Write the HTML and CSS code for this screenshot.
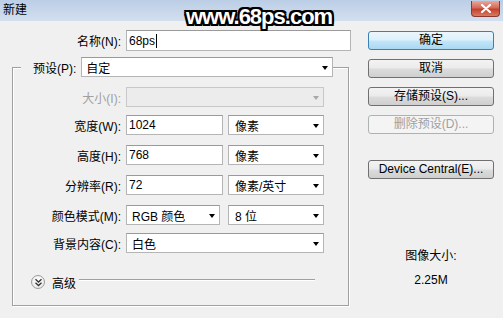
FILE: index.html
```html
<!DOCTYPE html>
<html lang="zh-CN">
<head>
<meta charset="utf-8">
<title>新建</title>
<link rel="stylesheet" href="styles.css">
</head>
<body>
<div class="window">
  <div class="titlebar">
    <span class="title">新建</span>
    <span class="close"><svg width="12" height="9" viewBox="0 0 12 9"><path d="M2 1 L10 8 M10 1 L2 8" stroke="#fff" stroke-width="2.2" stroke-linecap="round"/></svg></span>
    <span class="watermark">www.68ps.com</span>
  </div>
  <div class="content">
    <div class="main">
      <div class="row name-row">
        <label class="lbl lbl-outer">名称(N):</label>
        <div class="input input-name">68ps<span class="caret"></span></div>
      </div>
      <fieldset class="group">
        <legend class="legend">
          <span class="legend-lbl">预设(P):</span>
          <div class="sel sel-preset"><span>自定</span><i class="arrow"></i></div>
        </legend>
        <div class="rows">
          <div class="row">
            <label class="lbl disabled">大小(I):</label>
            <div class="sel sel-wide sel-disabled"><span></span><i class="arrow arrow-disabled"></i></div>
          </div>
          <div class="row tight">
            <label class="lbl">宽度(W):</label>
            <div class="input input-num">1024</div>
            <div class="sel sel-unit"><span>像素</span><i class="arrow"></i></div>
          </div>
          <div class="row">
            <label class="lbl">高度(H):</label>
            <div class="input input-num">768</div>
            <div class="sel sel-unit"><span>像素</span><i class="arrow"></i></div>
          </div>
          <div class="row">
            <label class="lbl">分辨率(R):</label>
            <div class="input input-num">72</div>
            <div class="sel sel-unit"><span>像素/英寸</span><i class="arrow"></i></div>
          </div>
          <div class="row">
            <label class="lbl">颜色模式(M):</label>
            <div class="sel sel-mode"><span>RGB 颜色</span><i class="arrow"></i></div>
            <div class="sel sel-unit"><span>8 位</span><i class="arrow"></i></div>
          </div>
          <div class="row tight">
            <label class="lbl">背景内容(C):</label>
            <div class="sel sel-wide"><span>白色</span><i class="arrow"></i></div>
          </div>
          <div class="row adv-row">
            <span class="adv-icon"><svg width="9" height="9" viewBox="0 0 9 9"><path d="M1.5 1.2 L4.5 4 L7.5 1.2 M1.5 4.8 L4.5 7.6 L7.5 4.8" fill="none" stroke="#333" stroke-width="1.3"/></svg></span>
            <span class="adv-text">高级</span>
            <span class="adv-line"></span>
          </div>
        </div>
      </fieldset>
    </div>
    <div class="side">
      <div class="btn btn-default">确定</div>
      <div class="btn">取消</div>
      <div class="btn">存储预设(S)...</div>
      <div class="btn btn-disabled">删除预设(D)...</div>
      <div class="btn btn-device">Device Central(E)...</div>
      <div class="size-label">图像大小:</div>
      <div class="size-value">2.25M</div>
    </div>
  </div>
</div>
</body>
</html>
```
FILE: styles.css
```css
html, body {
  margin: 0;
  padding: 0;
}
body {
  width: 503px;
  height: 318px;
  overflow: hidden;
  background: #f0f0f0;
  font-family: "Liberation Sans", "Noto Sans CJK SC", sans-serif;
  font-size: 12px;
  color: #000;
}
.window {
  width: 503px;
  height: 318px;
  background: #f0f0f0;
}
.titlebar {
  position: relative;
  height: 21px;
  background: linear-gradient(#bccee6, #d3dfee);
  display: flex;
  align-items: flex-start;
  justify-content: space-between;
}
.title {
  padding: 3px 0 0 3px;
  line-height: 14px;
}
.close {
  margin: 1px 3px 0 0;
  width: 29px;
  height: 16px;
  box-sizing: border-box;
  border: 1px solid #8a3a30;
  border-top: none;
  border-radius: 0 0 4px 4px;
  background: linear-gradient(#eaa89a, #d46a58 45%, #c2412f 55%, #d77b5f);
  display: flex;
  align-items: center;
  justify-content: center;
}
.watermark {
  position: absolute;
  left: 186px;
  top: 4px;
  font-family: "Liberation Sans", sans-serif;
  font-weight: bold;
  font-size: 22px;
  letter-spacing: -1px;
  line-height: 26px;
  color: #fff;
  text-shadow:
    2px 0 0 #000, -2px 0 0 #000, 0 2px 0 #000, 0 -2px 0 #000,
    2px 2px 0 #000, -2px -2px 0 #000, 2px -2px 0 #000, -2px 2px 0 #000,
    1px 1px 1px #000;
}
.content {
  display: flex;
  padding-top: 9px;
}
.main {
  width: 355px;
}
.row {
  display: flex;
  align-items: center;
  height: 20px;
}
.name-row {
  height: 21px;
}
.lbl {
  box-sizing: border-box;
  width: 113px;
  padding-right: 5px;
  text-align: right;
  white-space: nowrap;
}
.lbl-outer {
  width: 126px;
}
.disabled {
  color: #a0a0a0;
}
.input {
  box-sizing: border-box;
  height: 20px;
  background: #fff;
  border: 1px solid #b5b5b5;
  border-top-color: #9a9a9a;
  padding-left: 2px;
  display: flex;
  align-items: center;
  white-space: nowrap;
}
.input-name {
  width: 225px;
  height: 21px;
}
.caret {
  display: inline-block;
  width: 0;
  height: 14px;
  border-left: 1px solid #000;
  margin-left: 1px;
}
.input-num {
  width: 97px;
  margin-right: 5px;
}
.sel {
  box-sizing: border-box;
  height: 20px;
  background: #fff;
  border: 1px solid #b5b5b5;
  border-top-color: #9a9a9a;
  padding: 0 4px 0 5px;
  display: flex;
  align-items: center;
  justify-content: space-between;
  white-space: nowrap;
}
.sel-preset {
  width: 252px;
  padding-left: 4px;
}
.sel-wide {
  width: 198px;
}
.sel-unit {
  width: 96px;
  padding-left: 6px;
}
.sel-mode {
  width: 94px;
  margin-right: 8px;
}
.sel-disabled {
  background: #ececec;
  border-color: #c8c8c8;
}
.arrow {
  display: block;
  width: 0;
  height: 0;
  border-left: 3.5px solid transparent;
  border-right: 3.5px solid transparent;
  border-top: 4px solid #000;
  margin-top: 1px;
}
.arrow-disabled {
  border-top-color: #a8a8a8;
}
.group {
  margin: 6px 0 0 12px;
  padding: 10px 0 13px 0;
  width: 337px;
  box-sizing: border-box;
  border: 1px solid #a0a0a0;
  box-shadow: 1px 1px 0 #fff, inset 1px 1px 0 #fff;
  min-width: 0;
}
.legend {
  display: flex;
  align-items: center;
  margin-left: 8px;
  padding: 0;
  height: 20px;
  background: #f0f0f0;
}
.legend-lbl {
  padding-left: 12px;
  padding-right: 5px;
  white-space: nowrap;
}
.rows {
  display: flex;
  flex-direction: column;
  gap: 10px;
}
.tight {
  margin-top: -2px;
}
.adv-row {
  margin-top: 9px;
}
.adv-icon {
  margin-left: 18px;
  width: 14px;
  height: 14px;
  box-sizing: border-box;
  border: 1px solid #9a9a9a;
  border-radius: 50%;
  background: radial-gradient(circle at 50% 35%, #ffffff, #e2e2e2);
  display: flex;
  align-items: center;
  justify-content: center;
}
.adv-text {
  margin-left: 7px;
}
.adv-line {
  flex: 1;
  margin: 0 33px 4px 3px;
  height: 0;
  border-top: 1px solid #a0a0a0;
  border-bottom: 1px solid #fff;
}
.side {
  margin-left: 13px;
  width: 126px;
  padding-top: 1px;
  display: flex;
  flex-direction: column;
  gap: 9px;
}
.btn {
  box-sizing: border-box;
  height: 19px;
  border: 1px solid #707070;
  border-radius: 3px;
  background: linear-gradient(#f3f3f3, #ebebeb 48%, #dcdcdc 52%, #cfcfcf);
  text-align: center;
  line-height: 17px;
  white-space: nowrap;
}
.btn-default {
  border-color: #3c7fb1;
  background: linear-gradient(#ecf6fc, #dcf0fb 48%, #c3e5f8 52%, #a9d8f3);
}
.btn-disabled {
  border-color: #adb2b5;
  background: #f4f4f4;
  color: #a0a0a0;
}
.btn-device {
  margin-top: 17px;
}
.size-label {
  margin-top: 60px;
  text-align: center;
  line-height: 16px;
}
.size-value {
  margin-top: -1px;
  text-align: center;
  line-height: 16px;
}
```
